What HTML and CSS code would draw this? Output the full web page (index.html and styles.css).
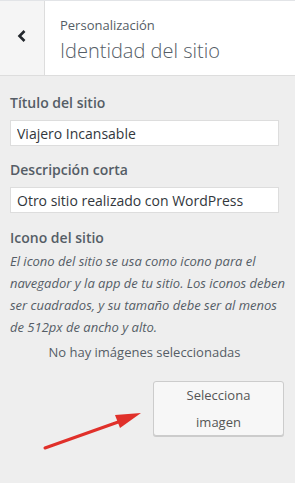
FILE: index.html
```html
<!DOCTYPE html>
<html lang="es">
<head>
    <meta charset="UTF-8">
    <meta name="viewport" content="width=device-width, initial-scale=1.0">
    <title>Identidad del sitio</title>
    <link rel="stylesheet" href="styles.css">
</head>
<body>
<header class="panel-header">
    <button class="back-button" type="button" aria-label="Volver">
        <svg width="12" height="14" viewBox="0 0 12 14">
            <path d="M8.5 2 L3.5 7 L8.5 12" fill="none" stroke="#23282d" stroke-width="2.6"/>
        </svg>
    </button>
    <div class="panel-title">
        <span class="panel-crumb">Personalización</span>
        <h1>Identidad del sitio</h1>
    </div>
</header>

<div class="panel-body">
    <!-- Site title -->
    <div class="field">
        <label for="blogname">Título del sitio</label>
        <input type="text" id="blogname" value="Viajero Incansable">
    </div>

    <!-- Tagline -->
    <div class="field">
        <label for="blogdescription">Descripción corta</label>
        <input type="text" id="blogdescription" value="Otro sitio realizado con WordPress">
    </div>

    <!-- Site icon -->
    <div class="field site-icon">
        <span class="field-title">Icono del sitio</span>
        <p class="description">El icono del sitio se usa como icono para el navegador y la app de tu sitio. Los iconos deben ser cuadrados, y su tamaño debe ser al menos de 512px de ancho y alto.</p>
        <p class="placeholder">No hay imágenes seleccionadas</p>
        <div class="actions">
            <svg class="arrow" width="110" height="50" viewBox="0 0 110 50">
                <line x1="12" y1="40" x2="88" y2="13" stroke="#e0302a" stroke-width="3" stroke-linecap="round"/>
                <polygon points="108,5 82,7 87,20" fill="#e0302a"/>
            </svg>
            <button class="select-button" type="button">Selecciona imagen</button>
        </div>
    </div>
</div>
</body>
</html>
```

FILE: styles.css
```css
/* General styles */
body {
    font-family: 'Open Sans', 'Noto Sans', sans-serif;
    margin: 0;
    padding: 0;
    background-color: #eeeeee;
    color: #555d66;
}

/* Header */
.panel-header {
    display: flex;
    height: 74px;
    background-color: #ffffff;
    border-top: 1px solid #e2e4e7;
    border-bottom: 1px solid #dddddd;
}

.back-button {
    width: 45px;
    padding: 0;
    border: none;
    border-right: 1px solid #dddddd;
    background-color: #f5f5f5;
    display: flex;
    align-items: center;
    justify-content: center;
    padding-bottom: 4px;
}

.panel-title {
    padding: 12px 0 0 15px;
}

.panel-crumb {
    display: block;
    font-size: 13px;
    line-height: 24px;
    color: #555d66;
}

.panel-title h1 {
    margin: 0;
    font-size: 20px;
    font-weight: 300;
    line-height: 28px;
    color: #555d66;
}

/* Body */
.panel-body {
    padding: 16px 16px 0 10px;
}

.field {
    margin-bottom: 13px;
}

.field label, .field-title {
    display: block;
    font-size: 14px;
    font-weight: 600;
    line-height: 22px;
    color: #555d66;
    margin-bottom: 6px;
}

.field input {
    box-sizing: border-box;
    width: 100%;
    height: 26px;
    padding: 0 6px;
    border: 1px solid #dddddd;
    background-color: #ffffff;
    font-family: inherit;
    font-size: 14px;
    color: #32373c;
    outline: none;
}

.site-icon {
    margin-top: 14px;
}

.site-icon .field-title {
    margin-bottom: 1px;
}

.description {
    margin: 0 -10px 0 0;
    font-size: 13px;
    font-style: italic;
    line-height: 22px;
    color: #555d66;
}

.placeholder {
    margin: 3px 0 0;
    text-align: center;
    font-size: 13px;
    line-height: 22px;
    color: #555d66;
}

.actions {
    display: flex;
    justify-content: flex-end;
    align-items: flex-start;
    margin-top: 18px;
    margin-right: -5px;
}

.arrow {
    margin-top: 27px;
    margin-right: 10px;
}

.select-button {
    width: 131px;
    height: 55px;
    padding: 0 20px;
    border: 1px solid #cccccc;
    border-radius: 3px;
    background-color: #f7f7f7;
    box-shadow: 0 1px 0 #cccccc;
    font-family: inherit;
    font-size: 13px;
    line-height: 27px;
    color: #555555;
}
```
